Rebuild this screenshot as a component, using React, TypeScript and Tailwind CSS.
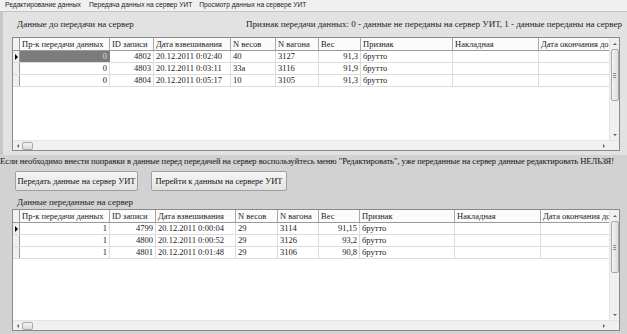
import React, { FC } from 'react';

type Col = { title: string; w: string; right?: boolean };

const TopCols: Col[] = [
  { title: 'Пр-к передачи данных', w: 'w-[90px]', right: true },
  { title: 'ID записи', w: 'w-[44px]', right: true },
  { title: 'Дата взвешивания', w: 'w-[77px]' },
  { title: 'N весов', w: 'w-[45px]' },
  { title: 'N вагона', w: 'w-[43px]' },
  { title: 'Вес', w: 'w-[42px]', right: true },
  { title: 'Признак', w: 'w-[92px]' },
  { title: 'Накладная', w: 'w-[86px]' },
  { title: 'Дата окончания до', w: 'w-[71px]' }
];

const BottomCols: Col[] = [
  { title: 'Пр-к передачи данных', w: 'w-[90px]', right: true },
  { title: 'ID записи', w: 'w-[46px]', right: true },
  { title: 'Дата взвешивания', w: 'w-[80px]' },
  { title: 'N весов', w: 'w-[42px]' },
  { title: 'N вагона', w: 'w-[41px]' },
  { title: 'Вес', w: 'w-[41px]', right: true },
  { title: 'Признак', w: 'w-[95px]' },
  { title: 'Накладная', w: 'w-[86px]' },
  { title: 'Дата окончания до', w: 'w-[69px]' }
];

const TopRows = [
  ['0', '4802', '20.12.2011 0:02:40', '40', '3127', '91,3', 'брутто', '', ''],
  ['0', '4803', '20.12.2011 0:03:11', '33а', '3116', '91,9', 'брутто', '', ''],
  ['0', '4804', '20.12.2011 0:05:17', '10', '3105', '91,3', 'брутто', '', '']
];

const BottomRows = [
  ['1', '4799', '20.12.2011 0:00:04', '29', '3114', '91,15', 'брутто', '', ''],
  ['1', '4800', '20.12.2011 0:00:52', '29', '3126', '93,2', 'брутто', '', ''],
  ['1', '4801', '20.12.2011 0:01:48', '29', '3106', '90,8', 'брутто', '', '']
];

const serif = 'font-["Liberation_Serif",serif]';

const VScroll: FC = () => (
  <div className="w-[10px] shrink-0 bg-[#f0f0f0] border-l border-[#e4e4e4] flex flex-col items-center">
    <div className="h-[11px] flex items-center justify-center">
      <div className="w-0 h-0 border-x-[2px] border-x-transparent border-b-[2px] border-b-[#606060]" />
    </div>
    <div className="w-[8px] h-[52px] rounded-[2px] border border-[#a8a8a8] bg-gradient-to-r from-[#f4f4f4] to-[#dcdcdc] flex flex-col items-center justify-center gap-[1px]">
      <div className="w-[3px] h-px bg-[#8c8c8c]" />
      <div className="w-[3px] h-px bg-[#8c8c8c]" />
      <div className="w-[3px] h-px bg-[#8c8c8c]" />
    </div>
    <div className="flex-1" />
    <div className="h-[10px] flex items-center justify-center">
      <div className="w-0 h-0 border-x-[2px] border-x-transparent border-t-[2px] border-t-[#606060]" />
    </div>
  </div>
);

const HScroll: FC = () => (
  <div className="h-[10px] shrink-0 flex bg-[#f0f0f0] border-t border-[#e4e4e4]">
    <div className="flex-1 flex items-center">
      <div className="w-[9px] flex items-center justify-center">
        <div className="w-0 h-0 border-y-[2px] border-y-transparent border-r-[2px] border-r-[#606060]" />
      </div>
      <div className="w-[11px] h-[8px] rounded-[2px] border border-[#a8a8a8] bg-gradient-to-b from-[#f4f4f4] to-[#dcdcdc]" />
      <div className="flex-1" />
      <div className="w-[10px] flex items-center justify-center">
        <div className="w-0 h-0 border-y-[2px] border-y-transparent border-l-[2px] border-l-[#606060]" />
      </div>
    </div>
    <div className="w-[10px] bg-[#f0f0f0]" />
  </div>
);

const Grid: FC<{ cols: Col[]; rows: string[][]; height: string; selected?: boolean }> = ({
  cols,
  rows,
  height,
  selected
}) => (
  <div className={`${height} ml-[12px] mr-[7px] border border-[#8a8a8a] bg-white flex flex-col ${serif} text-[8.5px] text-[#222]`}>
    <div className="flex flex-1 min-h-0">
      <div className="flex-1 min-w-0 overflow-hidden">
        <div className="flex h-[13px] border-b border-[#9a9a9a]">
          <div className="w-[7px] shrink-0 bg-[#f2f2f2] border-r border-[#9a9a9a]" />
          {cols.map((c) => (
            <div
              key={c.title}
              className={`${c.w} shrink-0 pl-[2px] pr-px border-r border-[#a8a8a8] bg-[#fbfbfb] leading-[12px] whitespace-nowrap overflow-hidden`}
            >
              {c.title}
            </div>
          ))}
        </div>
        {rows.map((r, i) => (
          <div key={i} className="flex h-[12px] border-b border-[#dcdcdc]">
            <div className="w-[7px] shrink-0 bg-[#f0f0f0] border-r border-[#9a9a9a] flex items-center justify-center">
              {i === 0 && (
                <div className="w-0 h-0 border-y-[3px] border-y-transparent border-l-[3px] border-l-black" />
              )}
            </div>
            {r.map((v, j) => {
              const c = cols[j];
              const sel = selected && i === 0 && j === 0;
              return (
                <div
                  key={j}
                  className={`${c.w} shrink-0 px-[2px] border-r leading-[11px] whitespace-nowrap overflow-hidden ${
                    c.right ? 'text-right' : ''
                  } ${sel ? 'bg-[#7c7c7c] text-[#dcdcdc] border-[#7c7c7c]' : 'border-[#dcdcdc]'}`}
                >
                  {v}
                </div>
              );
            })}
          </div>
        ))}
      </div>
      <VScroll />
    </div>
    <HScroll />
  </div>
);

const App: FC = () => {
  return (
    <div className={`w-[627px] h-[334px] overflow-hidden bg-[#d2d2d2] flex flex-col ${serif}`}>
      <div className='h-[12px] shrink-0 bg-[#f0f0f0] border-b border-[#c4c4c4] flex items-center font-["Liberation_Sans",sans-serif] text-[6.7px] text-[#222]'>
        <span className="ml-[5px]">Редактирование данных</span>
        <span className="ml-[8px]">Передача данных на сервер УИТ</span>
        <span className="ml-[7px]">Просмотр данных на сервере УИТ</span>
      </div>

      <div className="h-[143px] shrink-0 bg-[#e2e2e2] border-l-[3px] border-[#c8c8c8] flex flex-col">
        <div className="h-[25px] shrink-0 flex items-center justify-between pr-[5px] text-[9px] text-[#222]">
          <span className="ml-[14px]">Данные до передачи на сервер</span>
          <span>Признак передачи данных: 0 - данные не переданы на сервер УИТ, 1 - данные переданы на сервер</span>
        </div>
        <div className="-ml-[3px]">
          <Grid cols={TopCols} rows={TopRows} height="h-[114px]" selected />
        </div>
      </div>

      <div className="h-[12px] shrink-0 flex items-center whitespace-nowrap text-[8.5px] tracking-[-0.03px] text-[#111]">
        Если необходимо внести поправки в данные перед передачей на сервер воспользуйтесь меню "Редактировать", уже переданные на сервер данные редактировать НЕЛЬЗЯ!
      </div>

      <div className="h-[30px] shrink-0 flex gap-[13px] pl-[15px] pt-[4px]">
        <button className="w-[123px] h-[20px] whitespace-nowrap bg-gradient-to-b from-[#f6f6f6] to-[#e2e2e2] border border-[#a0a0a0] rounded-[2px] text-[8.5px] text-[#111]">
          Передать данные на сервер УИТ
        </button>
        <button className="w-[136px] h-[20px] whitespace-nowrap bg-gradient-to-b from-[#f6f6f6] to-[#e2e2e2] border border-[#a0a0a0] rounded-[2px] text-[8.5px] text-[#111]">
          Перейти к данным на сервере УИТ
        </button>
      </div>

      <div className="h-[12px] shrink-0 flex items-center pl-[17px] text-[9px] text-[#222]">Данные переданные на сервер</div>

      <Grid cols={BottomCols} rows={BottomRows} height="h-[122px]" />
    </div>
  );
};

export default App;
